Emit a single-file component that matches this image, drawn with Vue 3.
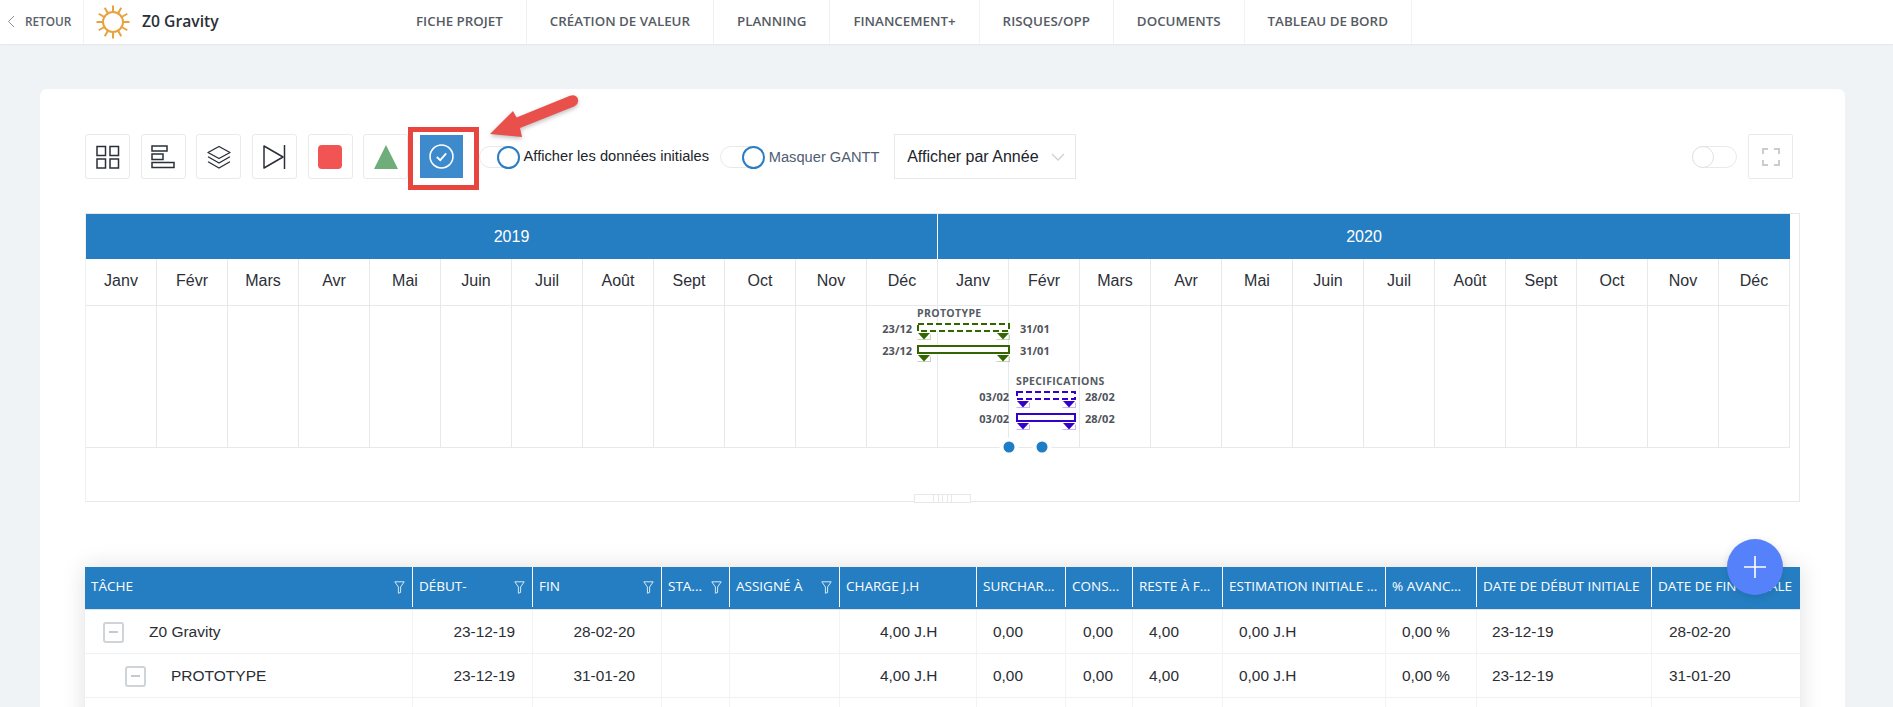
<script setup>
const tabs = ['Fiche projet', 'Création de valeur', 'Planning', 'Financement+', 'Risques/Opp', 'Documents', 'Tableau de bord']
const months = ['Janv', 'Févr', 'Mars', 'Avr', 'Mai', 'Juin', 'Juil', 'Août', 'Sept', 'Oct', 'Nov', 'Déc']
const allMonths = [...months, ...months]
const rays = Array.from({ length: 12 }, (_, i) => {
  const a = (i * Math.PI) / 6
  return { x1: 113 + Math.cos(a) * 10.5, y1: 22 + Math.sin(a) * 10.5, x2: 113 + Math.cos(a) * 16.5, y2: 22 + Math.sin(a) * 16.5 }
})
const tasks = [
  { name: 'PROTOTYPE', x: 917, w: 93, color: '#336600', labelY: 317, y1: 323, y2: 345, from: '23/12', to: '31/01', textL: 912, textR: 1020 },
  { name: 'SPECIFICATIONS', x: 1016, w: 60, color: '#3300cc', labelY: 385, y1: 391, y2: 413, from: '03/02', to: '28/02', textL: 1009, textR: 1085 }
]
const columns = [
  { label: 'Tâche', filter: true }, { label: 'Début-', filter: true }, { label: 'Fin', filter: true },
  { label: 'Sta...', filter: true }, { label: 'Assigné à', filter: true }, { label: 'Charge J.H' },
  { label: 'Surchar...' }, { label: 'Cons...' }, { label: 'Reste à f...' }, { label: 'Estimation initiale ...' },
  { label: '% Avanc...' }, { label: 'Date de début initiale' }, { label: 'Date de fin initiale' }
]
const cellStyle = [
  {}, { right: 17 }, { right: 26 }, {}, {}, { left: 40 }, { left: 16 }, { left: 17 }, { left: 16 }, { left: 16 }, { left: 16 }, { left: 15 }, { left: 17 }
].map(c => (c.right ? { justifyContent: 'flex-end', paddingRight: c.right + 'px' } : c.left ? { paddingLeft: c.left + 'px' } : {}))
const rows = [
  { level: 0, name: 'Z0 Gravity', cells: ['23-12-19', '28-02-20', '', '', '4,00 J.H', '0,00', '0,00', '4,00', '0,00 J.H', '0,00 %', '23-12-19', '28-02-20'] },
  { level: 1, name: 'PROTOTYPE', cells: ['23-12-19', '31-01-20', '', '', '4,00 J.H', '0,00', '0,00', '4,00', '0,00 J.H', '0,00 %', '23-12-19', '31-01-20'] },
  { level: 2, name: '', cells: ['', '', '', '', '', '', '', '', '', '', '', ''] }
]
</script>

<template>
  <div class="page">
    <header class="topbar">
      <a class="back">
        <svg class="back-icon" width="8" height="13" viewBox="0 0 8 13"><path d="M7 1 1.5 6.5 7 12" fill="none" stroke="#8a8f94" stroke-width="1" /></svg>
        <span>RETOUR</span>
      </a>
      <div class="brand">
        <svg class="sun" width="36" height="40" viewBox="95 2 36 40">
          <circle cx="113" cy="22" r="10" fill="none" stroke="#e8a23c" stroke-width="2" />
          <line v-for="(r, i) in rays" :key="i" :x1="r.x1" :y1="r.y1" :x2="r.x2" :y2="r.y2" stroke="#e8a23c" stroke-width="2" />
        </svg>
        <span class="brand-name">Z0 Gravity</span>
      </div>
      <nav class="tabs">
        <a v-for="t in tabs" :key="t" class="tab">{{ t }}</a>
      </nav>
    </header>

    <main class="card">
      <div class="toolbar">
        <button class="tool">
          <svg width="24" height="24" viewBox="0 0 24 24" fill="none" stroke="#2b2f38" stroke-width="1.5"><rect x="1" y="1.5" width="8.5" height="9" /><rect x="14" y="1.5" width="8.5" height="9" /><rect x="1" y="14" width="8.5" height="9" /><rect x="14" y="14" width="8.5" height="9" /></svg>
        </button>
        <button class="tool">
          <svg width="24" height="24" viewBox="0 0 24 24" fill="none" stroke="#2b2f38" stroke-width="1.5"><rect x="1" y="1" width="15" height="5" /><rect x="1" y="9" width="11" height="5.5" /><rect x="1" y="17.5" width="22" height="5" /></svg>
        </button>
        <button class="tool">
          <svg width="24" height="24" viewBox="0 0 24 24" fill="none" stroke="#2b2f38" stroke-width="1.4" stroke-linejoin="round" stroke-linecap="round"><path d="M12 1.5 23 7.5 12 13.5 1 7.5Z" /><path d="M1.5 12 12 18 22.5 12" /><path d="M1.5 17 12 23 22.5 17" /></svg>
        </button>
        <button class="tool">
          <svg width="24" height="26" viewBox="0 0 24 26" fill="none" stroke="#2b2f38" stroke-width="1.5" stroke-linejoin="round"><path d="M2 2 21 13 2 24Z" /><path d="M22.5 1v24" /></svg>
        </button>
        <button class="tool"><span class="red-square"></span></button>
        <button class="tool">
          <svg width="24" height="24" viewBox="0 0 24 24"><path d="M12 0 24 24H0Z" fill="#6fae7b" /></svg>
        </button>
        <button class="tool tool-active">
          <svg width="25" height="25" viewBox="0 0 24 24" fill="none" stroke="#fff" stroke-width="1.5"><circle cx="12" cy="12" r="11" /><path d="M7.5 12.5 10.8 15.5 16.5 9" stroke-width="1.7" /></svg>
          <span class="highlight"></span>
        </button>

        <div class="switch-group first">
          <span class="switch short"><span class="knob on"></span></span>
          <span class="switch-label dark">Afficher les données initiales</span>
        </div>
        <div class="switch-group second">
          <span class="switch"><span class="knob on"></span></span>
          <span class="switch-label">Masquer GANTT</span>
        </div>
        <div class="select">
          <span>Afficher par Année</span>
          <svg width="14" height="8" viewBox="0 0 14 8"><path d="M1 1 7 7 13 1" fill="none" stroke="#ccd0d4" stroke-width="1.3" /></svg>
        </div>
        <span class="spacer"></span>
        <span class="switch off"><span class="knob"></span></span>
        <button class="tool fullscreen">
          <svg width="18" height="18" viewBox="0 0 18 18" fill="none" stroke="#c9cdd1" stroke-width="2"><path d="M1 6V1h5M12 1h5v5M17 12v5h-5M6 17H1v-5" /></svg>
        </button>
      </div>

      <section class="gantt">
        <div class="gantt-inner">
          <div class="years"><div class="year">2019</div><div class="year">2020</div></div>
          <div class="grid-row months"><div v-for="(m, i) in allMonths" :key="i" class="month">{{ m }}</div></div>
          <div class="grid-row gantt-body">
            <div v-for="(m, i) in allMonths" :key="i" class="gantt-col"></div>
            <svg class="canvas" width="1704" height="160" viewBox="86 306 1704 160">
              <g v-for="t in tasks" :key="t.name">
                <text class="bar-label" :x="t.x" :y="t.labelY">{{ t.name }}</text>
                <rect :x="t.x + 1" :y="t.y1 + 1" :width="t.w - 2" height="7" fill="#fff" :stroke="t.color" stroke-width="2" stroke-dasharray="6 3" />
                <rect :x="t.x + 1" :y="t.y2 + 1" :width="t.w - 2" height="7" fill="#fff" :stroke="t.color" stroke-width="2" />
                <g v-for="y in [t.y1, t.y2]" :key="y">
                  <text class="bar-date" :x="t.textL" :y="y + 10" text-anchor="end">{{ t.from }}</text>
                  <text class="bar-date" :x="t.textR" :y="y + 10">{{ t.to }}</text>
                  <g v-for="mx in [t.x, t.x + t.w - 14]" :key="mx">
                    <path :d="`M${mx + 0.5} ${y + 16.5}h13v-5`" fill="none" :stroke="t.color" stroke-opacity=".28" />
                    <path :d="`M${mx + 1} ${y + 10}h12l-6 6.5Z`" :fill="t.color" />
                  </g>
                </g>
              </g>
              <g v-for="cx in [1009, 1042]" :key="cx">
                <circle :cx="cx" cy="447" r="9.5" fill="#fff" />
                <circle :cx="cx" cy="447" r="5.5" fill="#1f7dc6" />
              </g>
            </svg>
          </div>
          <div class="gantt-foot"></div>
        </div>
        <div class="splitter"><i></i><i></i><i></i><i></i><i></i></div>
      </section>

      <section class="table">
        <button class="fab">
          <svg width="24" height="24" viewBox="0 0 24 24"><path d="M12 1v22M1 12h22" stroke="#fff" stroke-width="1.6" /></svg>
        </button>
        <div class="tr thead">
          <div v-for="c in columns" :key="c.label" class="th">
            <span class="th-text">{{ c.label }}</span>
            <svg v-if="c.filter" class="filter" width="11" height="13" viewBox="0 0 11 13" fill="none" stroke="#d7e8f5" stroke-width="1"><path d="M.8.8h9.4L6.6 6v5.5L4.4 12.2V6Z" /></svg>
          </div>
        </div>
        <div v-for="r in rows" :key="r.level" class="tr">
          <div class="td td-name">
            <template v-if="r.name">
              <span class="tree-box" :class="'lvl-' + r.level"><i></i></span>
              <span>{{ r.name }}</span>
            </template>
          </div>
          <div v-for="(v, i) in r.cells" :key="i" class="td" :style="cellStyle[i + 1]">{{ v }}</div>
        </div>
      </section>
    </main>

    <svg class="arrow" width="100" height="50" viewBox="485 95 100 50">
      <path d="M490 134 513 111 516.5 117.5 570 95.8Q576 94 578 99 579 104 574 106.5L520 128 522 137Z" fill="#e9504c" />
    </svg>
  </div>
</template>

<style>
html, body { margin: 0; height: 707px; overflow: hidden; background: #f0f3f5; }
</style>

<style scoped>
.page { position: relative; height: 707px; overflow: hidden; background: #f0f3f5; font-family: "Liberation Sans", Arial, sans-serif; color: #23282e; }

.topbar { display: flex; align-items: stretch; height: 44px; background: #fff; box-shadow: 0 1px 2px rgba(0, 0, 0, .05); font-family: "Open Sans", sans-serif; }
.back { display: flex; align-items: center; width: 84px; box-sizing: border-box; padding: 0 0 2px 7px; gap: 10px; border-right: 1px solid #f0f2f4; font-size: 11.8px; font-weight: 600; color: #5a6068; }
.brand { display: flex; align-items: center; width: 309px; box-sizing: border-box; padding-left: 11px; gap: 11px; }
.brand-name { font-size: 15.7px; font-weight: 600; color: #2a2f38; padding-bottom: 2px; }
.tabs { display: flex; }
.tab { display: flex; align-items: center; padding: 0 23px 2px; border-right: 1px solid #eff1f3; font-size: 13.35px; font-weight: 600; color: #555b63; text-transform: uppercase; white-space: nowrap; }

.card { margin: 45px 48px 0 40px; padding: 45px 45px 0; height: 700px; background: #fff; border-radius: 7px; }

.toolbar { display: flex; align-items: center; gap: 10.67px; height: 45px; padding-right: 6px; margin-right: 1px; }
.tool { position: relative; display: flex; align-items: center; justify-content: center; flex: none; width: 45px; height: 45px; padding: 0; background: #fff; border: 1px solid #e8eaec; border-radius: 3px; }
.red-square { width: 24px; height: 24px; background: #f25454; border-radius: 4px; }
.tool-active { width: 43px; height: 43px; margin-left: 1px; background: #3d8bcd; border-color: #3d8bcd; border-radius: 0; }
.highlight { position: absolute; left: -13px; right: -17px; top: -9px; bottom: -13px; border: 5px solid #e8453f; }

.switch-group { display: flex; align-items: center; }
.switch-group.first { margin-left: 5px; gap: 4px; }
.switch-group.second { margin-left: 0; gap: 4px; }
.switch { position: relative; display: block; flex: none; box-sizing: border-box; width: 45px; height: 22px; border: 1px solid #e7eaed; border-radius: 11px; background: #fff; }
.switch.short { width: 41px; }
.knob { position: absolute; top: -1px; left: -1px; box-sizing: border-box; width: 22px; height: 22px; border: 1px solid #dfe3e6; border-radius: 50%; background: #fff; }
.knob.on { left: auto; right: -1px; width: 23px; height: 23px; border: 2px solid #2b7dc3; }
.switch-label { font-size: 14.67px; color: #4f5d73; white-space: nowrap; }
.switch-label.dark { color: #20242a; padding-bottom: 2px; }
.select { display: flex; align-items: center; justify-content: space-between; flex: none; box-sizing: border-box; width: 182px; height: 45px; margin-left: 4px; padding: 0 10px 0 12px; border: 1px solid #e6e8eb; font-size: 16px; color: #20242a; }
.spacer { flex: 1; }
.fullscreen { border-radius: 2px; }

.gantt { position: relative; box-sizing: border-box; width: 1715px; height: 289px; margin-top: 34px; border: 1px solid #e6e8eb; border-left-color: #eef0f2; }
.gantt-inner { width: 1704px; }
.years { display: grid; grid-template-columns: 1fr 1fr; height: 45px; background: #257ec2; }
.year { display: flex; align-items: center; justify-content: center; color: #fff; font-size: 16px; }
.year:first-child { border-right: 1px solid #fff; }
.grid-row { display: grid; grid-template-columns: repeat(24, 71px); }
.months { height: 46px; border-bottom: 1px solid #e6e8eb; }
.month { display: flex; align-items: center; justify-content: center; box-sizing: border-box; padding-bottom: 2px; border-right: 1px solid #e6e8eb; font-size: 16px; color: #2b3038; }
.gantt-body { position: relative; height: 141px; border-bottom: 1px solid #e6e8eb; }
.gantt-col { border-right: 1px solid #e6e8eb; }
.canvas { position: absolute; left: 0; top: 0; overflow: visible; }
.bar-label { font-family: "Open Sans", sans-serif; font-size: 10.5px; font-weight: 700; fill: #555b63; letter-spacing: .35px; }
.bar-date { font-family: "Open Sans", sans-serif; font-size: 11px; font-weight: 700; fill: #4f545c; }
.splitter { position: absolute; left: 828px; bottom: -2px; display: flex; justify-content: center; gap: 3.5px; box-sizing: border-box; width: 57px; height: 9px; border: 1px solid #e6e8eb; background: #fff; }
.splitter i { width: 1px; background: #e6e8eb; }

.table { position: relative; width: 1715px; margin-top: 65px; background: #fff; box-shadow: 0 0 22px rgba(0, 0, 0, .13); }
.tr { display: grid; grid-template-columns: 328px 120px 129px 68px 110px 137px 89px 67px 90px 163px 91px 175px 148px; height: 44px; }
.thead { height: 42px; background: #257ec2; border-bottom: 1px solid #dfe3e6; box-sizing: content-box; }
.th { display: flex; align-items: center; justify-content: space-between; box-sizing: border-box; padding: 0 7px 2px 6px; margin: 0 0 2px; border-right: 1px solid #fff; font-family: "Open Sans", sans-serif; font-size: 13.5px; color: #fff; text-transform: uppercase; white-space: nowrap; overflow: hidden; }
.th:last-child { border-right: 0; }
.filter { flex: none; margin-top: 2px; }
.td { display: flex; align-items: center; box-sizing: border-box; padding-top: 1px; border-right: 1px solid #f2f3f5; border-bottom: 1px solid #f0f1f3; font-size: 15.4px; color: #2a2e34; white-space: nowrap; }
.td:last-child { border-right: 0; }
.td-name { gap: 25px; font-size: 15.5px; }
.tree-box { position: relative; display: block; flex: none; box-sizing: border-box; width: 21px; height: 21px; border: 2px solid #cfd4d8; border-radius: 3px; background: #fff; }
.tree-box i { position: absolute; left: 4px; right: 4px; top: 7.5px; height: 2px; background: #c4c9cd; }
.lvl-0 { margin-left: 18px; }
.lvl-1 { margin-left: 40px; }
.fab { position: absolute; z-index: 2; right: 17px; top: -28px; display: flex; align-items: center; justify-content: center; width: 56px; height: 56px; padding: 0; border: 0; border-radius: 50%; background: #5582fb; box-shadow: 0 2px 8px rgba(0, 0, 0, .12); }

.arrow { position: absolute; left: 485px; top: 95px; filter: drop-shadow(0 2px 2px rgba(0, 0, 0, .25)); }
</style>
